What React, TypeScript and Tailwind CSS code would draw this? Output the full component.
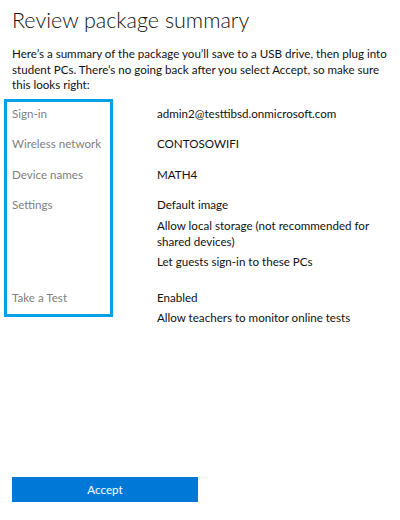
import React from "react";

const groups: { label: string; values: string[]; extra?: string }[] = [
  { label: "Sign-in", values: ["admin2@testtibsd.onmicrosoft.com"] },
  { label: "Wireless network", values: ["CONTOSOWIFI"] },
  { label: "Device names", values: ["MATH4"] },
  {
    label: "Settings",
    values: [
      "Default image",
      "Allow local storage (not recommended for shared devices)",
      "Let guests sign-in to these PCs",
    ],
    extra: "pb-[5px]",
  },
  { label: "Take a Test", values: ["Enabled", "Allow teachers to monitor online tests"] },
];

export default function App() {
  return (
    <div
      className="w-[400px] h-[520px] bg-white flex flex-col text-black"
      style={{ fontFamily: 'Lato, "Noto Sans", sans-serif' }}
    >
      <h1 className="pl-3 pt-[6px] text-[21.5px] leading-[28px] font-light text-[#111]">
        Review package summary
      </h1>
      <p className="pl-3 pr-3 mt-[12px] text-[11.6px] leading-[15.5px] text-[#111]">
        Here’s a summary of the package you’ll save to a USB drive, then plug into student PCs.
        There’s no going back after you select Accept, so make sure this looks right:
      </p>
      <div className="relative mt-[12px] ml-1">
        <div className="pointer-events-none absolute left-0 top-[-6px] w-[109px] h-[218px] border-[3px] border-[#00a1e6]" />
        <div className="grid grid-cols-[153px_1fr] gap-y-[14.5px] pt-[1px] text-[11.6px] leading-[16px]">
          {groups.map((g) => (
            <React.Fragment key={g.label}>
              <div className="pl-2 text-[#808080]">{g.label}</div>
              <div className={`flex flex-col gap-[4.5px] pr-3 ${g.extra ?? ""}`}>
                {g.values.map((v) => (
                  <div key={v} className="text-[#111]">
                    {v}
                  </div>
                ))}
              </div>
            </React.Fragment>
          ))}
        </div>
      </div>
      <div className="flex-1" />
      <div className="pl-3 pb-[18px]">
        <button className="w-[186px] h-[25px] bg-[#0078d7] text-white text-[11.6px] leading-[16px]">
          Accept
        </button>
      </div>
    </div>
  );
}
